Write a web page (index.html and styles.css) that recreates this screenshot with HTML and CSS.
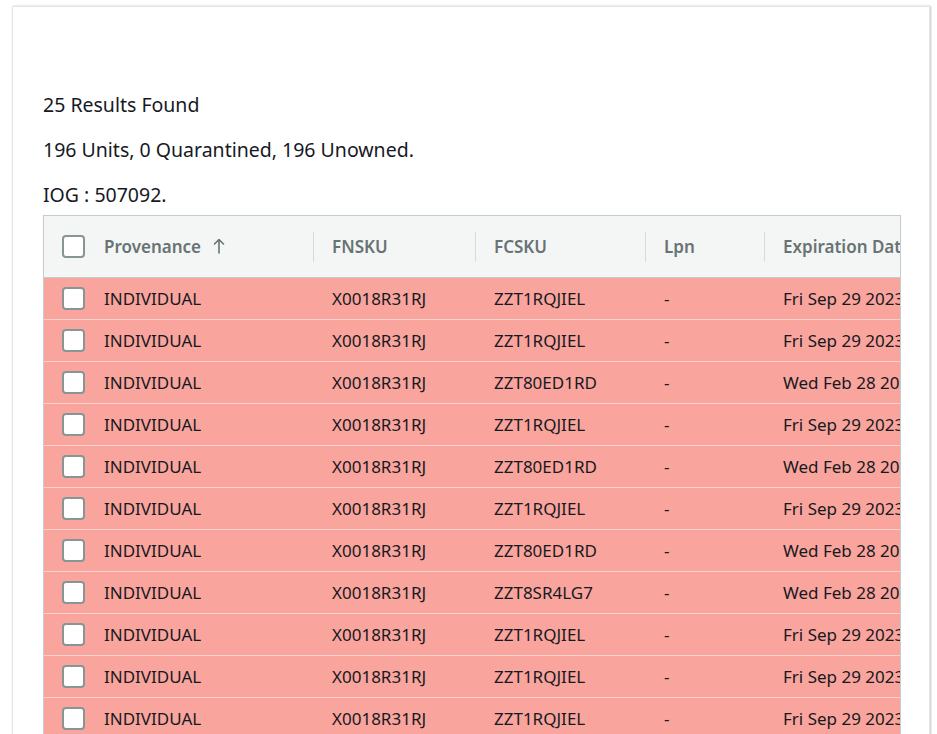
FILE: index.html
```html
<!DOCTYPE html>
<html>
<head>
<meta charset="utf-8">
<link rel="stylesheet" href="styles.css">
</head>
<body>
<div class="card">
  <div class="spacer"></div>
  <p class="line">25 Results Found</p>
  <p class="line">196 Units, 0 Quarantined, 196 Unowned.</p>
  <p class="line last">IOG : 507092.</p>
  <div class="table-wrap">
    <table class="grid">
      <thead>
        <tr>
          <th class="c1"><span class="cell-in"><span class="cb"></span><span>Provenance</span><svg class="arrow" width="12" height="16" viewBox="0 0 12 16"><path d="M6 15V1.5M1.5 6L6 1.5L10.5 6" fill="none" stroke="#687373" stroke-width="1.6" stroke-linecap="round" stroke-linejoin="round"/></svg></span></th>
          <th class="c2"><span class="cell-in div">FNSKU</span></th>
          <th class="c3"><span class="cell-in div">FCSKU</span></th>
          <th class="c4"><span class="cell-in div">Lpn</span></th>
          <th class="c5"><span class="cell-in div">Expiration Date</span></th>
        </tr>
      </thead>
      <tbody>
        <tr><td><span class="cell-in"><span class="cb"></span>INDIVIDUAL</span></td><td>X0018R31RJ</td><td>ZZT1RQJIEL</td><td>-</td><td>Fri Sep 29 2023</td></tr>
        <tr><td><span class="cell-in"><span class="cb"></span>INDIVIDUAL</span></td><td>X0018R31RJ</td><td>ZZT1RQJIEL</td><td>-</td><td>Fri Sep 29 2023</td></tr>
        <tr><td><span class="cell-in"><span class="cb"></span>INDIVIDUAL</span></td><td>X0018R31RJ</td><td>ZZT80ED1RD</td><td>-</td><td>Wed Feb 28 2024</td></tr>
        <tr><td><span class="cell-in"><span class="cb"></span>INDIVIDUAL</span></td><td>X0018R31RJ</td><td>ZZT1RQJIEL</td><td>-</td><td>Fri Sep 29 2023</td></tr>
        <tr><td><span class="cell-in"><span class="cb"></span>INDIVIDUAL</span></td><td>X0018R31RJ</td><td>ZZT80ED1RD</td><td>-</td><td>Wed Feb 28 2024</td></tr>
        <tr><td><span class="cell-in"><span class="cb"></span>INDIVIDUAL</span></td><td>X0018R31RJ</td><td>ZZT1RQJIEL</td><td>-</td><td>Fri Sep 29 2023</td></tr>
        <tr><td><span class="cell-in"><span class="cb"></span>INDIVIDUAL</span></td><td>X0018R31RJ</td><td>ZZT80ED1RD</td><td>-</td><td>Wed Feb 28 2024</td></tr>
        <tr><td><span class="cell-in"><span class="cb"></span>INDIVIDUAL</span></td><td>X0018R31RJ</td><td>ZZT8SR4LG7</td><td>-</td><td>Wed Feb 28 2024</td></tr>
        <tr><td><span class="cell-in"><span class="cb"></span>INDIVIDUAL</span></td><td>X0018R31RJ</td><td>ZZT1RQJIEL</td><td>-</td><td>Fri Sep 29 2023</td></tr>
        <tr><td><span class="cell-in"><span class="cb"></span>INDIVIDUAL</span></td><td>X0018R31RJ</td><td>ZZT1RQJIEL</td><td>-</td><td>Fri Sep 29 2023</td></tr>
        <tr><td><span class="cell-in"><span class="cb"></span>INDIVIDUAL</span></td><td>X0018R31RJ</td><td>ZZT1RQJIEL</td><td>-</td><td>Fri Sep 29 2023</td></tr>
      </tbody>
    </table>
  </div>
</div>
</body>
</html>
```
FILE: styles.css
```css
html, body {
  margin: 0;
  padding: 0;
  background: #ffffff;
  overflow: hidden;
}
body {
  padding: 6px 6px 0 12px;
  font-family: "Noto Sans", "Open Sans", sans-serif;
  color: #16191f;
}
.card {
  width: 856px;
  border: 1px solid #e4e6e6;
  border-bottom: none;
  box-shadow: 1px 0 2px rgba(0, 0, 0, 0.22);
  padding: 0 30px;
  background: #fff;
  height: 740px;
}
.spacer {
  height: 85px;
}
.line {
  margin: 0 0 20px 0;
  font-size: 19.5px;
  line-height: 25px;
}
.line.last {
  margin-bottom: 8px;
}
.table-wrap {
  border: 1px solid #c6cbcb;
  border-bottom: none;
  overflow: hidden;
  width: 856px;
}
.grid {
  border-collapse: collapse;
  table-layout: fixed;
  width: 900px;
  font-size: 17px;
}
.grid th {
  background: #f4f6f6;
  color: #687373;
  font-weight: 600;
  text-align: left;
  height: 61px;
  padding: 0;
  border-bottom: 1px solid #c6cbcb;
  white-space: nowrap;
  overflow: hidden;
}
.c1 { width: 269px; }
.c2 { width: 162px; }
.c3 { width: 170px; }
.c4 { width: 119px; }
.c5 { width: 180px; }
.cell-in {
  display: flex;
  align-items: center;
  height: 30px;
  padding-left: 18px;
}
.grid th .cell-in.div {
  border-left: 1px solid #d5dbdb;
}
.grid td {
  background: #f9a49c;
  height: 41px;
  padding: 0 0 0 19px;
  border-bottom: 1px solid #fbd3ce;
  white-space: nowrap;
  overflow: hidden;
}
.grid td:first-child {
  padding-left: 0;
}
.cb {
  display: inline-block;
  flex: none;
  box-sizing: border-box;
  width: 23px;
  height: 23px;
  border: 2px solid #879596;
  border-radius: 4px;
  background: #fff;
  margin-right: 19px;
}
.arrow {
  margin-left: 12px;
  margin-top: -1px;
}
```
